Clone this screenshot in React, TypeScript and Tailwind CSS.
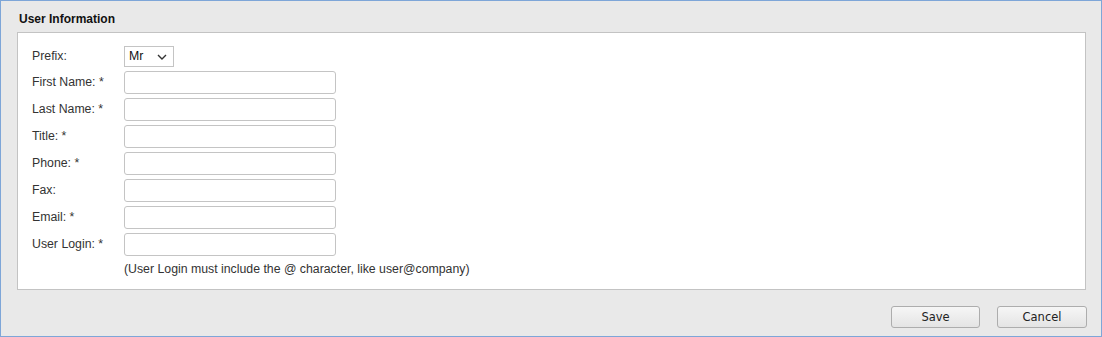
import React from 'react';

const fields = [
  { label: 'First Name: *' },
  { label: 'Last Name: *' },
  { label: 'Title: *' },
  { label: 'Phone: *' },
  { label: 'Fax:' },
  { label: 'Email: *' },
  { label: 'User Login: *' },
];

export default function App() {
  return (
    <div
      className="w-[1102px] h-[337px] border border-[#7ea6d8] bg-[#e9e9e9] flex flex-col text-[12.3px] text-[#333]"
      style={{ fontFamily: '"Liberation Sans", Arial, sans-serif' }}
    >
      {/* Header */}
      <div className="h-[31px] pl-[18px] pt-[11px] font-bold text-[12px] leading-[14px] text-[#111]">
        User Information
      </div>

      {/* Form panel */}
      <div className="ml-[16px] w-[1069px] h-[258px] bg-white border border-[#c3c3c3] pl-[14px] pt-[13px]">
        <div className="flex items-center h-[21px]">
          <div className="w-[92px]">Prefix:</div>
          <div className="w-[50px] h-[21px] border border-[#c4c4c4] flex items-center justify-between pl-[4px] pr-[6px] text-[#111]">
            <span>Mr</span>
            <svg width="10" height="6" viewBox="0 0 10 6" fill="none">
              <path d="M1 1 L5 5 L9 1" stroke="#333" strokeWidth="1.4" />
            </svg>
          </div>
        </div>

        {fields.map((f) => (
          <div key={f.label} className="flex items-center h-[23px] mt-[4px]">
            <div className="w-[92px]">{f.label}</div>
            <div className="w-[212px] h-[23px] border border-[#c4c4c4] rounded-[3px] bg-white" />
          </div>
        ))}

        <div className="pl-[92px] mt-[6px] leading-[14px]">
          (User Login must include the @ character, like user@company)
        </div>
      </div>

      {/* Buttons */}
      <div className="flex justify-end gap-[17px] pr-[14px] pt-[16px]">
        <button
          className="w-[89px] h-[22px] border border-[#adadad] rounded-[3px] bg-gradient-to-b from-[#f6f6f6] to-[#e4e4e4] text-[#222] leading-[20px]"
          style={{ fontFamily: '"DejaVu Sans", Tahoma, sans-serif', fontSize: '11.5px' }}
        >
          Save
        </button>
        <button
          className="w-[90px] h-[22px] border border-[#adadad] rounded-[3px] bg-gradient-to-b from-[#f6f6f6] to-[#e4e4e4] text-[#222] leading-[20px]"
          style={{ fontFamily: '"DejaVu Sans", Tahoma, sans-serif', fontSize: '11.5px' }}
        >
          Cancel
        </button>
      </div>
    </div>
  );
}
